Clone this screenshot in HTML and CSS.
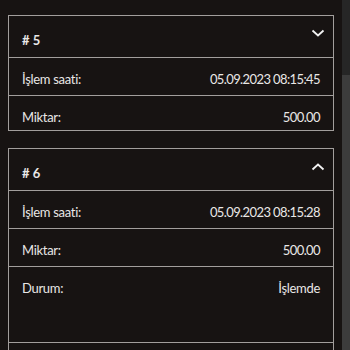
FILE: index.html
```html
<!DOCTYPE html>
<html lang="tr">
<head>
<meta charset="utf-8">
<link rel="stylesheet" href="styles.css">
</head>
<body>
<div class="page">
  <main class="list">
    <section class="card">
      <div class="card-head">
        <span class="title"># 5</span>
        <svg class="chev" width="14" height="8" viewBox="0 0 14 8"><path d="M1.5 1.5 L7 6.5 L12.5 1.5" fill="none" stroke="#f2f2f2" stroke-width="1.8"/></svg>
      </div>
      <div class="row"><span>İşlem saati:</span><span class="val">05.09.2023 08:15:45</span></div>
      <div class="row row-last1"><span>Miktar:</span><span class="val">500.00</span></div>
    </section>
    <section class="card">
      <div class="card-head head2">
        <span class="title"># 6</span>
        <svg class="chev" width="14" height="8" viewBox="0 0 14 8"><path d="M1.5 6.5 L7 1.5 L12.5 6.5" fill="none" stroke="#f2f2f2" stroke-width="1.8"/></svg>
      </div>
      <div class="row"><span>İşlem saati:</span><span class="val">05.09.2023 08:15:28</span></div>
      <div class="row"><span>Miktar:</span><span class="val">500.00</span></div>
      <div class="row row-tall"><span>Durum:</span><span>İşlemde</span></div>
      <div class="row"><span></span><span></span></div>
    </section>
  </main>
  <div class="scrollbar"><div class="thumb"></div></div>
</div>
</body>
</html>
```
FILE: styles.css
```css
html, body {
  margin: 0;
  padding: 0;
  background: #171312;
}
body {
  font-family: Lato, "Open Sans", sans-serif;
  color: #e9e7e6;
}
.page {
  display: flex;
  height: 350px;
  overflow: hidden;
}
.list {
  flex: 1;
  padding: 15px 8px 0 8px;
  display: flex;
  flex-direction: column;
  gap: 17px;
}
.card {
  border: 1px solid #a29e9c;
  background: #171312;
}
.card-head {
  height: 41px;
  display: flex;
  justify-content: space-between;
  align-items: flex-start;
  padding: 0 8px 0 13px;
  border-bottom: 1px solid #a29e9c;
  box-sizing: content-box;
}
.title {
  font-weight: 700;
  font-size: 13px;
  line-height: 16px;
  margin-top: 16px;
}
.chev {
  margin-top: 13px;
}
.head2 .chev { margin-top: 14px; }
.row {
  display: flex;
  justify-content: space-between;
  font-size: 13px;
  line-height: 16px;
  letter-spacing: -0.3px;
  height: 38px;
  box-sizing: border-box;
  padding: 13px 13px 0 13px;
  border-bottom: 1px solid #a29e9c;
}
.val {
  letter-spacing: -0.6px;
}
.row-last1 {
  height: 34px;
  border-bottom: none;
}
.row-tall {
  height: 76px;
}
.scrollbar {
  width: 8px;
  background: #262626;
  display: flex;
  flex-direction: column;
}
.thumb {
  margin-top: 75px;
  flex: 1;
  background: #3c3c3c;
}
```
